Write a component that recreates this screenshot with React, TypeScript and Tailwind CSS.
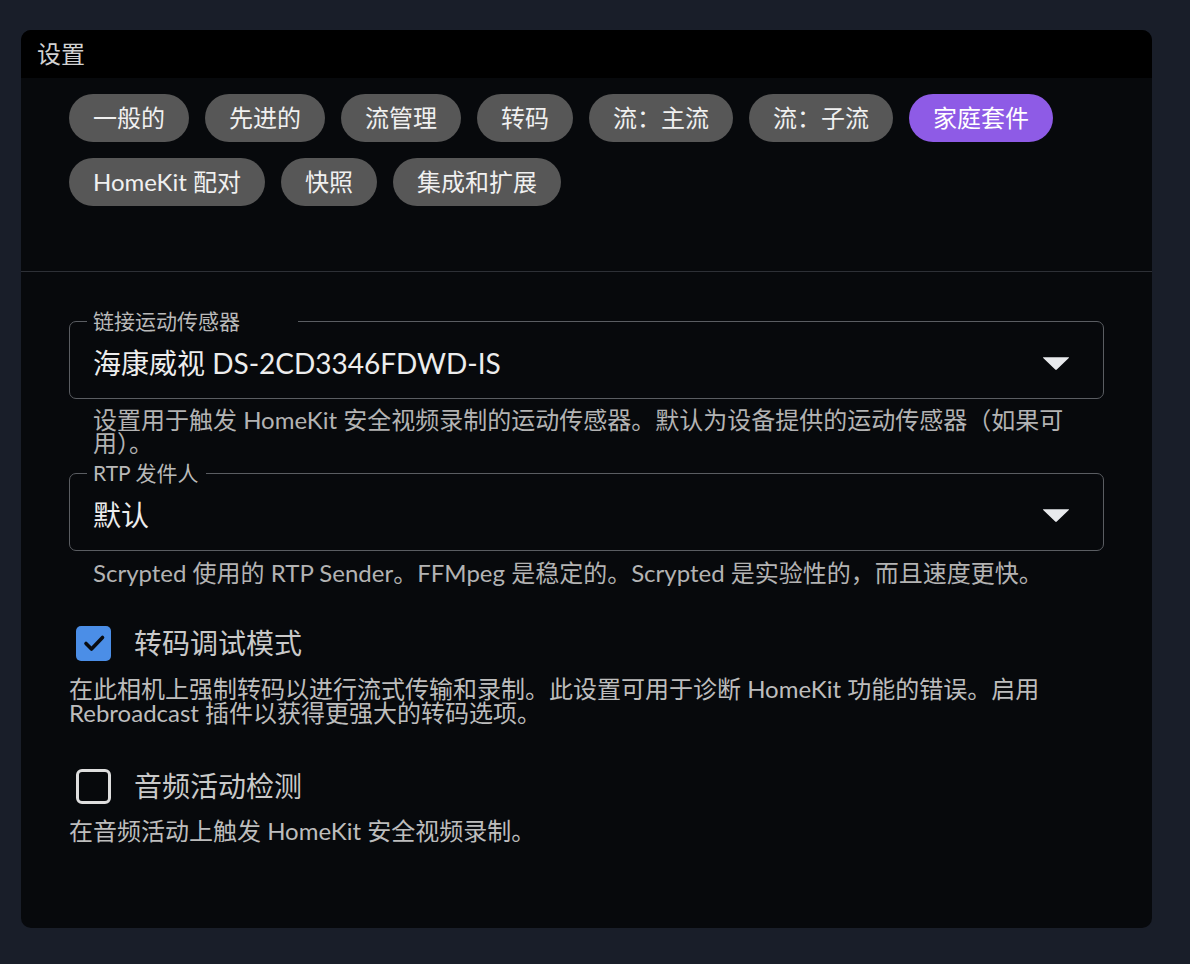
import { useState } from 'react'

const tabs = ['一般的', '先进的', '流管理', '转码', '流：主流', '流：子流', '家庭套件', 'HomeKit 配对', '快照', '集成和扩展']

function ArrowDown() {
  return (
    <svg width="28" height="15" viewBox="0 0 28 15" className="shrink-0">
      <path d="M1.5 1.2 L26.5 1.2 Q27.6 1.2 26.8 2 L14.8 13.6 Q14 14.4 13.2 13.6 L1.2 2 Q0.4 1.2 1.5 1.2 Z" fill="#e8eaed" />
    </svg>
  )
}

function SelectField({ label, value, notch, helper }: { label: string; value: string; notch: string; helper: string }) {
  return (
    <div>
      <fieldset className="border-[1.5px] border-[#5a5d62] rounded-[7px] px-[23px] pb-[17px]">
        <legend className={`ml-[-6px] px-[6px] text-[21px] leading-[22px] text-[#b9b9b9] ${notch}`}>{label}</legend>
        <div className="mt-[13px] h-[36px] flex items-center justify-between pr-[10px]">
          <span className="text-[28px] leading-[36px] text-[#ededed]">{value}</span>
          <ArrowDown />
        </div>
      </fieldset>
      <p className="px-[24px] text-[24px] leading-[23px] text-[#b3b3b3]">{helper}</p>
    </div>
  )
}

function CheckRow({ checked, label, onToggle }: { checked: boolean; label: string; onToggle: () => void }) {
  return (
    <button onClick={onToggle} className="h-[36px] flex items-center gap-[23px] pl-[7px] text-left">
      {checked ? (
        <span className="w-[35px] h-[35px] rounded-[5px] bg-[#4b8ee7] flex items-center justify-center">
          <svg width="24" height="24" viewBox="0 0 24 24">
            <path d="M4 12.5 L9.5 18 L20.5 6.5" fill="none" stroke="#0a0c10" strokeWidth="3.6" strokeLinecap="round" strokeLinejoin="round" />
          </svg>
        </span>
      ) : (
        <span className="w-[35px] h-[35px] rounded-[6px] border-[3.5px] border-[#dedede]" />
      )}
      <span className="text-[28px] leading-[36px] text-[#c9c9c9]">{label}</span>
    </button>
  )
}

export default function App() {
  const [active, setActive] = useState('家庭套件')
  const [debugMode, setDebugMode] = useState(true)
  const [audioDetect, setAudioDetect] = useState(false)

  return (
    <div
      className="min-h-screen w-full bg-[#191e29] pt-[30px] pl-[21px]"
      style={{ fontFamily: "Lato, 'Noto Sans CJK SC', 'Noto Sans', sans-serif" }}
    >
      <div className="w-[1131px] h-[898px] rounded-[10px] bg-[#07090c] overflow-hidden">
        {/* Header */}
        <div className="h-[48px] bg-black flex items-center pl-[16px] text-[24px] text-[#d2d2d2]">设置</div>

        {/* Tabs */}
        <div className="px-[48px] pt-[16px] pb-[65px] flex flex-wrap gap-[16px]">
          {tabs.map((t) => (
            <button
              key={t}
              onClick={() => setActive(t)}
              className={`h-[48px] px-[24px] rounded-full flex items-center text-[24px] leading-none ${
                active === t ? 'bg-[#8e5be6] text-white' : 'bg-[#575757] text-[#f0f0f0]'
              }`}
            >
              {t}
            </button>
          ))}
        </div>

        <div className="h-px bg-[#2d3036]" />

        {/* Form */}
        <div className="px-[48px] pt-[38px]">
          <div className="[&_p]:mt-[9px]">
            <SelectField
              label="链接运动传感器"
              notch="w-[211px]"
              value="海康威视 DS-2CD3346FDWD-IS"
              helper="设置用于触发 HomeKit 安全视频录制的运动传感器。默认为设备提供的运动传感器（如果可用）。"
            />
          </div>
          <div className="mt-[8px] [&_p]:mt-[10px]">
            <SelectField
              label="RTP 发件人"
              notch="w-[119px]"
              value="默认"
              helper="Scrypted 使用的 RTP Sender。FFMpeg 是稳定的。Scrypted 是实验性的，而且速度更快。"
            />
          </div>

          <div className="mt-[41px]">
            <CheckRow checked={debugMode} label="转码调试模式" onToggle={() => setDebugMode(!debugMode)} />
          </div>
          <p className="mt-[16px] text-[24px] leading-[24px] text-[#bdbdbd]">
            在此相机上强制转码以进行流式传输和录制。此设置可用于诊断 HomeKit 功能的错误。启用 Rebroadcast 插件以获得更强大的转码选项。
          </p>

          <div className="mt-[43px]">
            <CheckRow checked={audioDetect} label="音频活动检测" onToggle={() => setAudioDetect(!audioDetect)} />
          </div>
          <p className="mt-[15px] text-[24px] leading-[24px] text-[#bdbdbd]">在音频活动上触发 HomeKit 安全视频录制。</p>
        </div>
      </div>
    </div>
  )
}
